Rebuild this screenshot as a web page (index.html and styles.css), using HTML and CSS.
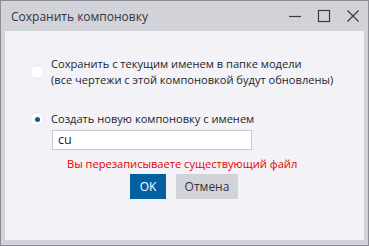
FILE: index.html
```html
<!DOCTYPE html>
<html>
<head>
<meta charset="utf-8">
<link rel="stylesheet" href="styles.css">
</head>
<body>
<div class="window">
  <div class="titlebar">
    <span class="title">Сохранить компоновку</span>
    <div class="controls">
      <svg class="ctl" width="14" height="14" viewBox="0 0 14 14"><path d="M1 7.5H13" stroke="#3a3a44" stroke-width="1.2"/></svg>
      <svg class="ctl" width="14" height="14" viewBox="0 0 14 14"><rect x="1.5" y="1.5" width="11" height="11" fill="none" stroke="#3a3a44" stroke-width="1.2"/></svg>
      <svg class="ctl" width="14" height="14" viewBox="0 0 14 14"><path d="M1.5 1.5L12.5 12.5M12.5 1.5L1.5 12.5" stroke="#3a3a44" stroke-width="1.2"/></svg>
    </div>
  </div>
  <div class="content">
    <div class="option first">
      <span class="radio"></span>
      <span class="label">Сохранить с текущим именем в папке модели<br>(все чертежи с этой компоновкой будут обновлены)</span>
    </div>
    <div class="option second">
      <span class="radio checked"></span>
      <span class="label">Создать новую компоновку с именем</span>
    </div>
    <div class="input">cu</div>
    <div class="error">Вы перезаписываете существующий файл</div>
    <div class="buttons">
      <button class="btn primary">OK</button>
      <button class="btn">Отмена</button>
    </div>
  </div>
</div>
</body>
</html>
```
FILE: styles.css
```css
html, body {
  margin: 0;
  padding: 0;
}
body {
  width: 369px;
  height: 246px;
  font-family: "Open Sans", "Noto Sans", sans-serif;
  font-size: 11.1px;
  color: #1e1e28;
}
.window {
  box-sizing: border-box;
  width: 369px;
  height: 246px;
  border: 1px solid #8c8c94;
  background: #d2d3d8;
  display: flex;
  flex-direction: column;
}
.titlebar {
  height: 30px;
  display: flex;
  align-items: center;
  justify-content: space-between;
  padding: 0 8px 0 10px;
}
.title {
  color: #333340;
  font-size: 12px;
}
.controls {
  display: flex;
  gap: 15px;
  align-items: center;
}
.ctl { display: block; }
.content {
  flex: 1;
  margin: 0 4px 5px 4px;
  background: #f2f2f7;
  padding: 25px 0 0 25px;
  display: flex;
  flex-direction: column;
}
.option {
  display: flex;
  align-items: center;
  gap: 7px;
}
.label {
  line-height: 16px;
}
.radio {
  width: 14px;
  height: 14px;
  border-radius: 50%;
  background: #fff;
  box-sizing: border-box;
  border: 1px solid #e6e6ec;
  display: flex;
  align-items: center;
  justify-content: center;
  flex: none;
}
.radio.checked::after {
  content: "";
  width: 5px;
  height: 5px;
  border-radius: 50%;
  background: #0a5c9c;
}
.second {
  margin-top: 23px;
}
.input {
  margin: 3px 0 0 22px;
  width: 200px;
  height: 20px;
  box-sizing: border-box;
  border: 1px solid #c5c9d4;
  background: #fff;
  padding: 0 5px;
  line-height: 18px;
  font-size: 12.5px;
}
.error {
  margin: 6px 0 0 37px;
  color: #e60000;
  line-height: 16px;
}
.buttons {
  margin: 2px 0 0 100px;
  display: flex;
  gap: 10px;
}
.btn {
  font-family: inherit;
  font-size: 12px;
  height: 25px;
  border: none;
  background: #d2d3d8;
  color: #333340;
  padding: 0;
  width: 62px;
}
.btn.primary {
  width: 36px;
  background: #0060a0;
  color: #fff;
}
```
